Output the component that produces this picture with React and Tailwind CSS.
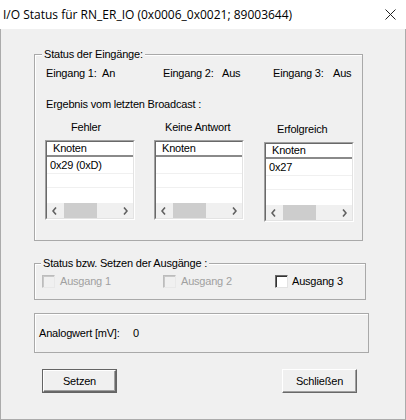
import React from "react";

const font = { fontFamily: '"Liberation Sans", Arial, sans-serif', letterSpacing: "-0.2px" };

function Chevron({ dir }) {
  return (
    <svg width="5" height="8" viewBox="0 0 5 8">
      <path
        d={dir === "left" ? "M4 0.5 L1 4 L4 7.5" : "M1 0.5 L4 4 L1 7.5"}
        fill="none"
        stroke="#606060"
        strokeWidth="1.6"
      />
    </svg>
  );
}

function ListBox({ item }) {
  return (
    <div className="w-[90px] h-[80px] border border-t-[#a0a0a0] border-l-[#a0a0a0] border-r-white border-b-white">
      <div className="w-full h-full border border-t-[#696969] border-l-[#696969] border-r-[#e3e3e3] border-b-[#e3e3e3] bg-white flex flex-col">
        <div className="h-[15px] bg-white border-b-2 border-[#8a8a8a] pl-[6px] flex items-center leading-[13px]">
          Knoten
        </div>
        <div className="h-[17px] border-b border-[#f0f0f0] pl-[3px] flex items-center leading-[13px]">
          {item}
        </div>
        <div className="h-[14px] border-b border-[#f0f0f0]" />
        <div className="h-[15px]" />
        <div className="h-[15px] bg-[#f0f0f0] flex items-center relative">
          <div className="w-[15px] flex justify-center">
            <Chevron dir="left" />
          </div>
          <div className="ml-[2px] w-[33px] h-[15px] bg-[#cdcdcd]" />
          <div className="ml-auto w-[15px] flex justify-center">
            <Chevron dir="right" />
          </div>
        </div>
      </div>
    </div>
  );
}

function CheckBox({ enabled }) {
  return (
    <div
      className={
        enabled
          ? "w-[13px] h-[13px] border border-t-[#696969] border-l-[#696969] border-r-[#e3e3e3] border-b-[#e3e3e3] bg-white shadow-[inset_1px_1px_0_#333]"
          : "w-[13px] h-[13px] border border-t-[#bcbcbc] border-l-[#bcbcbc] border-r-[#e8e8e8] border-b-[#e8e8e8] bg-[#f0f0f0] shadow-[inset_1px_1px_0_#c8c8c8]"
      }
    />
  );
}

export default function App() {
  return (
    <div className="w-[406px] h-[420px] bg-[#f0f0f0] text-[11px] text-black" style={font}>
      <div className="h-[29px] bg-white flex items-center pl-[3px]">
        <span
          className="text-[12px] leading-[16px] text-black"
          style={{ fontFamily: '"Open Sans", "Noto Sans", sans-serif', letterSpacing: "0px" }}
        >
          I/O Status für RN_ER_IO (0x0006_0x0021; 89003644)
        </span>
        <svg className="ml-auto mr-[10px]" width="11" height="11" viewBox="0 0 11 11">
          <path d="M0.5 0.5 L10.5 10.5 M10.5 0.5 L0.5 10.5" stroke="#222" strokeWidth="1" />
        </svg>
      </div>
      <div className="h-[391px] border-l border-r border-b border-[#ababab] flex flex-col">
        {/* Group 1 */}
        <div className="relative ml-[33px] mt-[25px] w-[329px] h-[187px] border border-[#a9a9a9] shadow-[inset_1px_1px_0_#fff]">
          <span className="absolute left-[7px] top-[-7px] px-[2px] bg-[#f0f0f0] leading-[13px]">
            Status der Eingänge:
          </span>
          <div className="flex pl-[11px] mt-[12px] leading-[13px]">
            <span className="w-[56px]">Eingang 1:</span>
            <span className="w-[61px]">An</span>
            <span className="w-[59px]">Eingang 2:</span>
            <span className="w-[51px]">Aus</span>
            <span className="w-[60px]">Eingang 3:</span>
            <span>Aus</span>
          </div>
          <div className="pl-[11px] mt-[18px] leading-[13px]">Ergebnis vom letzten Broadcast :</div>
          <div className="flex pl-[10px] mt-[10px]">
            <div className="w-[109px] flex flex-col">
              <span className="pl-[26px] leading-[13px]">Fehler</span>
              <div className="mt-[6px]">
                <ListBox item="0x29 (0xD)" />
              </div>
            </div>
            <div className="w-[110px] flex flex-col">
              <span className="pl-[11px] leading-[13px]">Keine Antwort</span>
              <div className="mt-[6px]">
                <ListBox item="" />
              </div>
            </div>
            <div className="flex flex-col pt-[2px]">
              <span className="pl-[13px] leading-[13px]">Erfolgreich</span>
              <div className="mt-[6px]">
                <ListBox item="0x27" />
              </div>
            </div>
          </div>
        </div>

        {/* Group 2 */}
        <div className="relative ml-[33px] mt-[22px] w-[332px] h-[37px] border border-[#a9a9a9] shadow-[inset_1px_1px_0_#fff]">
          <span className="absolute left-[6px] top-[-7px] px-[2px] bg-[#f0f0f0] leading-[13px]">
            Status bzw. Setzen der Ausgänge :
          </span>
          <div className="flex items-center pl-[7px] mt-[11px]">
            <div className="w-[121px] flex items-center gap-[5px]">
              <CheckBox enabled={false} />
              <span className="text-[#a0a0a0] leading-[13px]">Ausgang 1</span>
            </div>
            <div className="w-[112px] flex items-center gap-[5px]">
              <CheckBox enabled={false} />
              <span className="text-[#a0a0a0] leading-[13px]">Ausgang 2</span>
            </div>
            <div className="flex items-center gap-[4px]">
              <CheckBox enabled={true} />
              <span className="leading-[13px]">Ausgang 3</span>
            </div>
          </div>
        </div>

        {/* Group 3 */}
        <div className="ml-[33px] mt-[13px] w-[335px] h-[40px] border border-[#a9a9a9] shadow-[inset_1px_1px_0_#fff] flex items-center pl-[4px]">
          <span className="w-[94px] leading-[13px]">Analogwert [mV]:</span>
          <span className="leading-[13px]">0</span>
        </div>

        {/* Buttons */}
        <div className="flex mt-[16px]">
          <button className="ml-[41px] w-[75px] h-[24px] border border-[#646464] bg-[#f0f0f0] p-0">
            <div className="w-full h-full border border-t-white border-l-white border-r-[#696969] border-b-[#696969] flex items-center justify-center shadow-[inset_-1px_-1px_0_#a0a0a0] leading-[13px]">
              Setzen
            </div>
          </button>
          <button className="ml-[165px] w-[75px] h-[24px] border border-t-white border-l-white border-r-[#696969] border-b-[#696969] bg-[#f0f0f0] p-0 shadow-[inset_-1px_-1px_0_#a0a0a0] flex items-center justify-center leading-[13px]">
            Schließen
          </button>
        </div>
      </div>
    </div>
  );
}
